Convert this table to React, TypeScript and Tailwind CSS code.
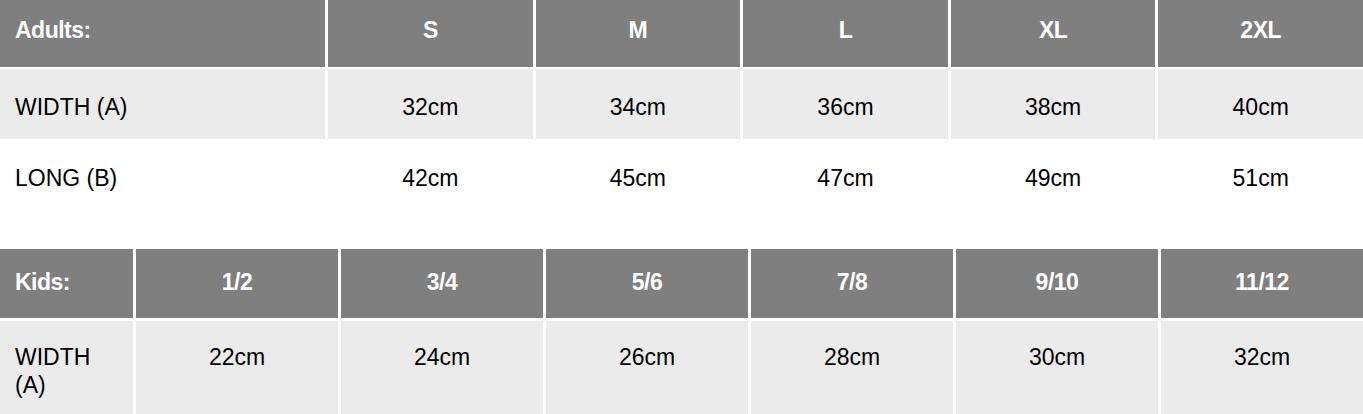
const adults = {
  sizes: ['S', 'M', 'L', 'XL', '2XL'],
  rows: [
    { label: 'WIDTH (A)', values: ['32cm', '34cm', '36cm', '38cm', '40cm'], shaded: true, pad: 'pt-[24px]' },
    { label: 'LONG (B)', values: ['42cm', '45cm', '47cm', '49cm', '51cm'], shaded: false, pad: 'pt-[23px]' },
  ],
}

const kids = {
  sizes: ['1/2', '3/4', '5/6', '7/8', '9/10', '11/12'],
  rows: [
    { label: 'WIDTH (A)', values: ['22cm', '24cm', '26cm', '28cm', '30cm', '32cm'], shaded: true, pad: 'pt-[22px]' },
  ],
}

function HeaderCell({ children, first, pad }: { children: React.ReactNode; first?: boolean; pad: string }) {
  return (
    <div className={`bg-[#7f7f7f] text-white font-bold tracking-[-0.5px] ${pad} ${first ? 'px-[15px] text-left' : 'text-center'}`}>
      {children}
    </div>
  )
}

function BodyCell({ children, first, shaded, pad }: { children: React.ReactNode; first?: boolean; shaded: boolean; pad: string }) {
  return (
    <div className={`${shaded ? 'bg-[#ebebeb]' : 'bg-white'} text-black ${pad} ${first ? 'px-[15px] text-left' : 'text-center'}`}>
      {children}
    </div>
  )
}

export default function App() {
  return (
    <div className="w-[1363px] h-[414px] overflow-hidden bg-white font-['Liberation_Sans',Arial,sans-serif] text-[23px] leading-[28px]">
      {/* Adults */}
      <div className="grid grid-cols-[325px_repeat(5,1fr)] grid-rows-[67px_70px_70px] gap-x-[3px] gap-y-[2px]">
        <HeaderCell first pad="pt-[16px]">Adults:</HeaderCell>
        {adults.sizes.map((s) => (
          <HeaderCell key={s} pad="pt-[16px]">{s}</HeaderCell>
        ))}
        {adults.rows.map((r) => (
          <>
            <BodyCell key={r.label} first shaded={r.shaded} pad={r.pad}>{r.label}</BodyCell>
            {r.values.map((v, i) => (
              <BodyCell key={r.label + i} shaded={r.shaded} pad={r.pad}>{v}</BodyCell>
            ))}
          </>
        ))}
      </div>

      {/* Kids */}
      <div className="mt-[38px] grid grid-cols-[133px_repeat(6,1fr)] grid-rows-[69px_96px] gap-x-[3px] gap-y-[3px]">
        <HeaderCell first pad="pt-[19px]">Kids:</HeaderCell>
        {kids.sizes.map((s) => (
          <HeaderCell key={s} pad="pt-[19px]">{s}</HeaderCell>
        ))}
        {kids.rows.map((r) => (
          <>
            <BodyCell key={r.label} first shaded={r.shaded} pad={r.pad}>{r.label}</BodyCell>
            {r.values.map((v, i) => (
              <BodyCell key={r.label + i} shaded={r.shaded} pad={r.pad}>{v}</BodyCell>
            ))}
          </>
        ))}
      </div>
    </div>
  )
}
